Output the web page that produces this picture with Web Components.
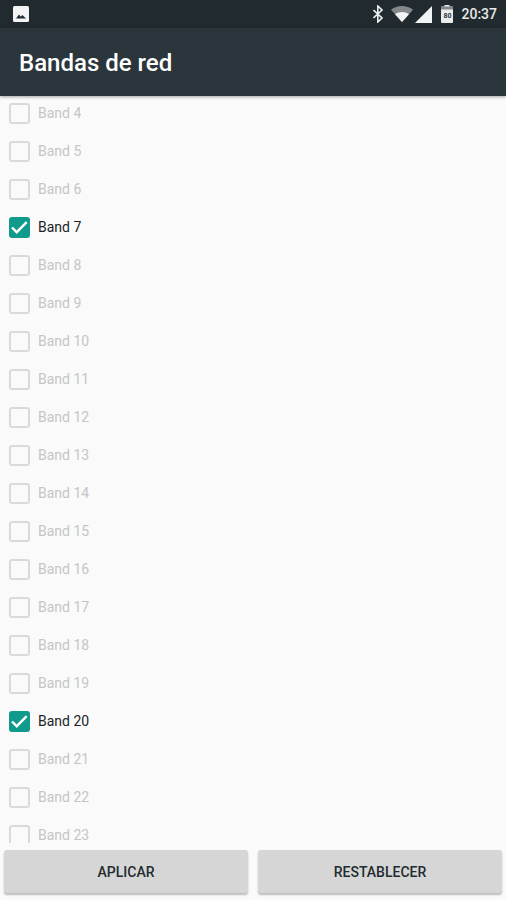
<!DOCTYPE html>
<html>
<head>
<meta charset="utf-8">
<style>
html, body { margin: 0; height: 100%; background: #fafafa; }
body { font-family: Roboto, "Noto Sans", sans-serif; overflow: hidden; }
</style>
</head>
<body>
<bands-screen>
  <status-bar slot="status"></status-bar>
  <app-toolbar slot="toolbar">Bandas de red</app-toolbar>
</bands-screen>
<script>
class StatusBar extends HTMLElement {
  constructor() {
    super();
    this.attachShadow({ mode: 'open' }).innerHTML = `
<style>
:host { display: flex; align-items: center; height: 28px; background: #212a2e; color: #e8eaea; padding: 0 9px 0 13px; }
svg { display: block; }
.right { margin-left: auto; display: flex; align-items: center; }
.time { font-size: 14px; font-weight: 500; margin-left: 8px; }
.batt { position: relative; width: 12px; height: 18px; margin-left: 9px; }
.batt span { position: absolute; left: 0; right: 0; top: 7px; text-align: center; font-size: 7px; line-height: 8px; font-weight: 700; color: #2a363c; }
</style>
<svg width="16" height="16" viewBox="0 0 16 16"><rect width="16" height="16" rx="1.5" fill="#f4f4f4"/><path d="M3 12.5 6 8.600l1.800 2.100 1.500-1.600 3.700 3.400z" fill="#212a2e"/></svg>
<div class="right">
  <svg width="10" height="18" viewBox="0 0 10 18" fill="none" stroke="#eceeee" stroke-width="1.600"><path d="M.5 5l8.500 8-4.200 4V1L9 5 .5 13"/></svg>
  <svg style="margin-left:8px" width="22" height="16" viewBox="0 0 22 16"><path d="M0 3.700C6.200-1.200 15.800-1.200 22 3.700L11 16z" fill="#83888a"/><path d="M4 8.200c4-3 10-3 14 0L11 16z" fill="#f2f3f3"/></svg>
  <svg style="margin-left:2px" width="17" height="17" viewBox="0 0 17 17"><path d="M17 0v17H0z" fill="#f2f3f3"/></svg>
  <div class="batt">
    <svg width="12" height="18" viewBox="0 0 12 18"><path d="M3.500 0h5v1.500H11a1 1 0 0 1 1 1V17a1 1 0 0 1-1 1H1a1 1 0 0 1-1-1V2.500a1 1 0 0 1 1-1h2.500z" fill="#eceeee"/><rect y="1.500" width="12" height="3" fill="#83888a"/></svg>
    <span>80</span>
  </div>
  <span class="time">20:37</span>
</div>`;
  }
}
customElements.define('status-bar', StatusBar);

class AppToolbar extends HTMLElement {
  constructor() {
    super();
    this.attachShadow({ mode: 'open' }).innerHTML = `
<style>
:host { display: flex; align-items: center; height: 68px; box-sizing: border-box; padding: 2px 0 0 19px; background: #2a363c; color: #fff; font-size: 24px; font-weight: 500; box-shadow: 0 1px 3px rgba(0,0,0,.35); position: relative; z-index: 1; }
</style>
<slot></slot>`;
  }
}
customElements.define('app-toolbar', AppToolbar);

class BandRow extends HTMLElement {
  constructor() {
    super();
    this.attachShadow({ mode: 'open' }).innerHTML = `
<style>
:host { display: flex; align-items: center; height: 38px; padding-left: 9px; font-size: 14px; color: #c4c6c6; }
:host([checked]) { color: #1c2326; }
.box { width: 21px; height: 21px; box-sizing: border-box; border-radius: 3px; border: 2px solid #dadada; margin-right: 8px; flex: none; }
:host([checked]) .box { background: #0f9a8b; border: 0; }
svg { display: none; }
:host([checked]) svg { display: block; }
</style>
<div class="box"><svg width="21" height="21" viewBox="0 0 21 21"><path d="M3 10.500l4.700 4.700 10-10" fill="none" stroke="#fff" stroke-width="2.400"/></svg></div>
<slot></slot>`;
  }
}
customElements.define('band-row', BandRow);

class FlatButton extends HTMLElement {
  constructor() {
    super();
    this.attachShadow({ mode: 'open' }).innerHTML = `
<style>
:host { display: flex; flex: 1; align-items: center; justify-content: center; height: 43px; background: #d6d6d6; border-radius: 3px; color: #222b2f; font-size: 14px; font-weight: 500; box-shadow: 0 2px 2px rgba(0,0,0,.25); }
</style>
<slot></slot>`;
  }
}
customElements.define('flat-button', FlatButton);

class BandsScreen extends HTMLElement {
  constructor() {
    super();
    const root = this.attachShadow({ mode: 'open' });
    root.innerHTML = `
<style>
:host { display: flex; flex-direction: column; height: 900px; width: 506px; }
.scroll { height: 747px; overflow: hidden; }
.list { margin-top: -2px; }
.actions { display: flex; gap: 10px; padding: 7px 4px 0; }
</style>
<slot name="status"></slot>
<slot name="toolbar"></slot>
<div class="scroll"><div class="list"></div></div>
<div class="actions"><flat-button>APLICAR</flat-button><flat-button>RESTABLECER</flat-button></div>`;
    const list = root.querySelector('.list');
    for (let n = 4; n <= 23; n++) {
      const row = document.createElement('band-row');
      if (n === 7 || n === 20) row.setAttribute('checked', '');
      row.textContent = 'Band ' + n;
      list.append(row);
    }
  }
}
customElements.define('bands-screen', BandsScreen);
</script>
</body>
</html>
